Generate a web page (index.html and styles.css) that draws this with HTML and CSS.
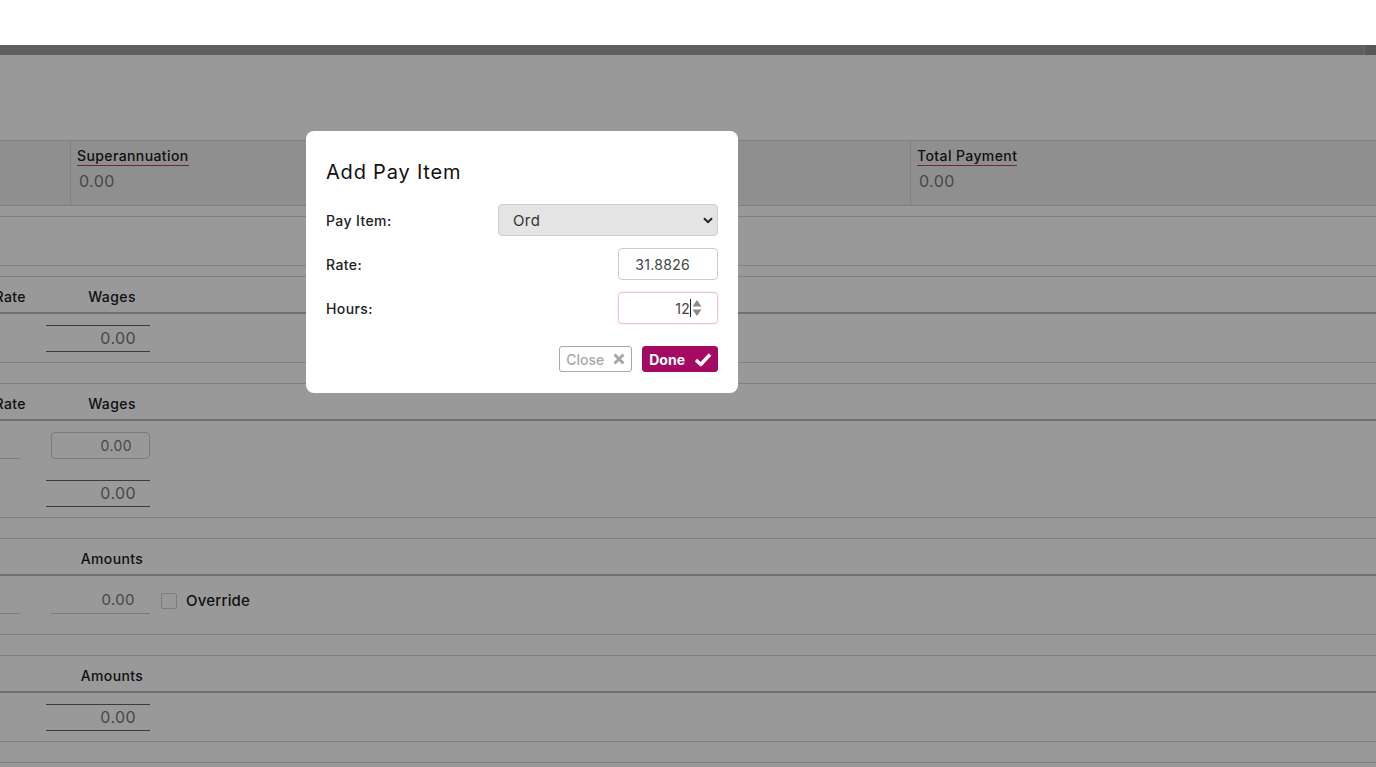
FILE: index.html
```html
<!DOCTYPE html>
<html lang="en">
<head>
    <meta charset="UTF-8">
    <meta name="viewport" content="width=device-width, initial-scale=1.0">
    <title>Pay Run</title>
    <link rel="stylesheet" href="styles.css">
</head>
<body>
    <div class="topbar"></div>
    <div class="toolbar"><span class="toolbar-end"></span></div>

    <main class="page">
        <div class="page-head"></div>

        <!-- Totals -->
        <div class="summary">
            <div class="sum-cell sum-first"></div>
            <div class="sum-cell">
                <span class="sum-label">Superannuation</span>
                <span class="sum-value">0.00</span>
            </div>
            <div class="sum-cell">
                <span class="sum-label">PAYG</span>
                <span class="sum-value">0.00</span>
            </div>
            <div class="sum-cell sum-last">
                <span class="sum-label">Total Payment</span>
                <span class="sum-value">0.00</span>
            </div>
        </div>

        <div class="blank-block"></div>

        <!-- Ordinary wages -->
        <section class="grid-table">
            <div class="gt-head">
                <div class="col-a">Rate</div>
                <div class="col-b">Wages</div>
            </div>
            <div class="gt-body">
                <div class="gt-row">
                    <div class="col-a"></div>
                    <div class="cell-b">
                        <div class="total">0.00</div>
                    </div>
                </div>
            </div>
        </section>

        <!-- Other wages -->
        <section class="grid-table">
            <div class="gt-head">
                <div class="col-a">Rate</div>
                <div class="col-b">Wages</div>
            </div>
            <div class="gt-body">
                <div class="gt-row">
                    <div class="col-a"><div class="stub"></div></div>
                    <div class="cell-b stack">
                        <div class="amount-input">0.00</div>
                        <div class="total">0.00</div>
                    </div>
                </div>
            </div>
        </section>

        <!-- Tax -->
        <section class="grid-table">
            <div class="gt-head">
                <div class="col-a"></div>
                <div class="col-b">Amounts</div>
            </div>
            <div class="gt-body tall">
                <div class="gt-row">
                    <div class="col-a"><div class="stub"></div></div>
                    <div class="cell-b">
                        <div class="amount-line">0.00</div>
                        <span class="checkbox"></span>
                        <span class="check-label">Override</span>
                    </div>
                </div>
            </div>
        </section>

        <!-- Deductions -->
        <section class="grid-table">
            <div class="gt-head">
                <div class="col-a"></div>
                <div class="col-b">Amounts</div>
            </div>
            <div class="gt-body">
                <div class="gt-row">
                    <div class="col-a"></div>
                    <div class="cell-b">
                        <div class="total">0.00</div>
                    </div>
                </div>
            </div>
        </section>

        <section class="grid-table">
            <div class="gt-head">
                <div class="col-a"></div>
                <div class="col-b"></div>
            </div>
        </section>
    </main>

    <!-- Add pay item dialog -->
    <div class="backdrop">
        <div class="modal">
            <h2>Add Pay Item</h2>

            <div class="form-row">
                <label>Pay Item:</label>
                <div class="select-wrap">
                    <select class="select">
                        <option>Ord</option>
                    </select>
                    <svg class="chevron" width="10" height="7" viewBox="0 0 10 7"><path d="M1 1.2 L5 5.2 L9 1.2" fill="none" stroke="#222" stroke-width="2"/></svg>
                </div>
            </div>

            <div class="form-row">
                <label>Rate:</label>
                <input class="field" type="text" value="31.8826">
            </div>

            <div class="form-row last">
                <label>Hours:</label>
                <div class="field focus">
                    <span>12</span>
                    <span class="caret"></span>
                    <svg class="spin" width="10" height="18" viewBox="0 0 10 18"><path d="M0.5 7.5 L5 1 L9.5 7.5 Z" fill="#8a8a8a"/><path d="M0.5 10.5 L9.5 10.5 L5 17 Z" fill="#8a8a8a"/></svg>
                </div>
            </div>

            <div class="actions">
                <button class="btn btn-close">Close
                    <svg width="12" height="12" viewBox="0 0 12 12"><path d="M1.5 1.5 L10.5 10.5 M10.5 1.5 L1.5 10.5" stroke="#a8a8a8" stroke-width="3"/></svg>
                </button>
                <button class="btn btn-done">Done
                    <svg width="18" height="15" viewBox="0 0 18 15"><path d="M2 8 L6.8 12.5 L16 2.5" fill="none" stroke="#fff" stroke-width="3.4" stroke-linejoin="round"/></svg>
                </button>
            </div>
        </div>
    </div>
</body>
</html>
```

FILE: styles.css
```css
/* General */
html, body {
    margin: 0;
    padding: 0;
}

body {
    font-family: 'Inter', 'Open Sans', sans-serif;
    letter-spacing: 0.4px;
    color: #1a1a1a;
    background: #fff;
    overflow: hidden;
    height: 767px;
}

.topbar {
    height: 45px;
    background: #fff;
}

.toolbar {
    height: 10px;
    background: #9e9e9e;
    display: flex;
    justify-content: flex-end;
}

.toolbar-end {
    width: 11px;
    background: #929292;
    border-left: 1px solid #b4b4b4;
}

.page {
    margin-left: -40px;
}

.page-head {
    height: 85px;
}

/* Totals row */
.summary {
    display: flex;
    height: 64px;
    background: #eeeeee;
    border-top: 1px solid #d5d5d5;
    border-bottom: 1px solid #d5d5d5;
}

.sum-cell {
    box-sizing: border-box;
    width: 420px;
    padding: 6px 6px 0;
    border-right: 1px solid #d5d5d5;
    display: flex;
    flex-direction: column;
    align-items: flex-start;
}

.sum-first {
    width: 111px;
}

.sum-last {
    flex: 1;
    border-right: none;
}

.sum-label {
    font-size: 14px;
    font-weight: 500;
    line-height: 18px;
    border-bottom: 1px solid #b0407a;
}

.sum-value {
    font-size: 16px;
    line-height: 28px;
    margin-top: 1px;
    padding-left: 2px;
    color: #787878;
}

.blank-block {
    height: 48px;
    margin: 10px 0;
    border-top: 1px solid #d5d5d5;
    border-bottom: 1px solid #d5d5d5;
}

/* Item tables */
.grid-table {
    border-top: 1px solid #d5d5d5;
    border-bottom: 1px solid #d5d5d5;
    margin-bottom: 20px;
}

.gt-head {
    display: flex;
    height: 35px;
    border-bottom: 2px solid #bbbbbb;
    font-size: 14px;
    font-weight: 500;
}

.gt-head > div {
    line-height: 31px;
    padding-top: 4px;
}

.col-a {
    box-sizing: border-box;
    width: 86px;
    padding-right: 20px;
    text-align: right;
    flex-shrink: 0;
}

.col-b {
    width: 132px;
    text-align: center;
}

.gt-body {
    padding: 11px 0 10px;
}

.gt-body.tall {
    padding-bottom: 20px;
}

.gt-row {
    display: flex;
}

.cell-b {
    display: flex;
    align-items: center;
}

.cell-b.stack {
    flex-direction: column;
    align-items: flex-start;
    gap: 21px;
}

.total {
    box-sizing: border-box;
    width: 104px;
    height: 27px;
    line-height: 25px;
    border-top: 1px solid #646464;
    border-bottom: 1px solid #646464;
    padding-right: 14px;
    text-align: right;
    font-size: 16px;
    color: #787878;
}

.amount-input {
    box-sizing: border-box;
    width: 99px;
    height: 27px;
    line-height: 25px;
    margin-left: 5px;
    border: 1px solid #cccccc;
    border-radius: 4px;
    padding-right: 17px;
    text-align: right;
    font-size: 14px;
    color: #787878;
}

.amount-line {
    box-sizing: border-box;
    width: 99px;
    height: 27px;
    line-height: 26px;
    margin-left: 5px;
    border-bottom: 1px solid #cccccc;
    padding-right: 15px;
    text-align: right;
    font-size: 15px;
    color: #787878;
}

.stub {
    box-sizing: border-box;
    width: 50px;
    height: 27px;
    margin-left: auto;
    margin-right: 6px;
    border-bottom: 1px solid #cfcfcf;
}

.checkbox {
    box-sizing: border-box;
    width: 16px;
    height: 16px;
    margin-left: 11px;
    border: 1px solid #d0d0d0;
    border-radius: 2px;
    background: #fff;
}

.check-label {
    margin-left: 9px;
    font-size: 15px;
    font-weight: 500;
    letter-spacing: 0.2px;
}

/* Dialog */
.backdrop {
    position: fixed;
    top: 45px;
    left: 0;
    right: 0;
    bottom: 0;
    background: rgba(0, 0, 0, 0.4);
}

.modal {
    position: absolute;
    left: 306px;
    top: 86px;
    width: 432px;
    box-sizing: border-box;
    padding: 20px 20px 21px;
    background: #fff;
    border-radius: 8px;
}

.modal h2 {
    margin: 9px 0 20px;
    font-size: 20px;
    font-weight: 400;
    letter-spacing: 0.8px;
    line-height: 24px;
    color: #111;
}

.form-row {
    display: flex;
    align-items: center;
    justify-content: space-between;
    height: 32px;
    margin-bottom: 12px;
}

.form-row.last {
    margin-bottom: 22px;
}

.form-row label {
    font-size: 14px;
    font-weight: 500;
    color: #222;
}

.select-wrap {
    position: relative;
    width: 220px;
    height: 32px;
}

.select {
    appearance: none;
    -webkit-appearance: none;
    box-sizing: border-box;
    width: 100%;
    height: 32px;
    padding: 0 14px;
    background: #e4e4e4;
    border: 1px solid #cfcfcf;
    border-radius: 4px;
    font-family: inherit;
    letter-spacing: 0.4px;
    font-size: 15px;
    color: #333;
}

.chevron {
    position: absolute;
    right: 5px;
    top: 13px;
}

.field {
    box-sizing: border-box;
    width: 100px;
    height: 32px;
    padding: 0 27px 0 0;
    border: 1px solid #cccccc;
    border-radius: 4px;
    text-align: right;
    font-family: inherit;
    letter-spacing: 0.3px;
    font-size: 14px;
    color: #444;
    outline: none;
}

.field.focus {
    display: flex;
    align-items: center;
    justify-content: flex-end;
    padding-right: 15px;
    border-color: #f1c4de;
    box-shadow: 0 0 2px rgba(230, 150, 200, 0.5);
}

.caret {
    width: 1px;
    height: 18px;
    background: #222;
    margin-right: 1px;
}

.actions {
    display: flex;
    justify-content: flex-end;
    gap: 10px;
}

.btn {
    display: flex;
    align-items: center;
    gap: 9px;
    height: 26px;
    border-radius: 3px;
    font-family: inherit;
    font-size: 14px;
    cursor: pointer;
}

.btn-close {
    padding: 0 6px;
    background: #fff;
    border: 1px solid #a8a8a8;
    color: #a8a8a8;
    font-weight: 500;
}

.btn-close:hover {
    color: #777;
}

.btn-done {
    padding: 0 5px 0 6px;
    background: #a30b62;
    border: 1px solid #a30b62;
    color: #fff;
    font-weight: 700;
}

.btn-done:hover {
    background: #8c0653;
}
```
